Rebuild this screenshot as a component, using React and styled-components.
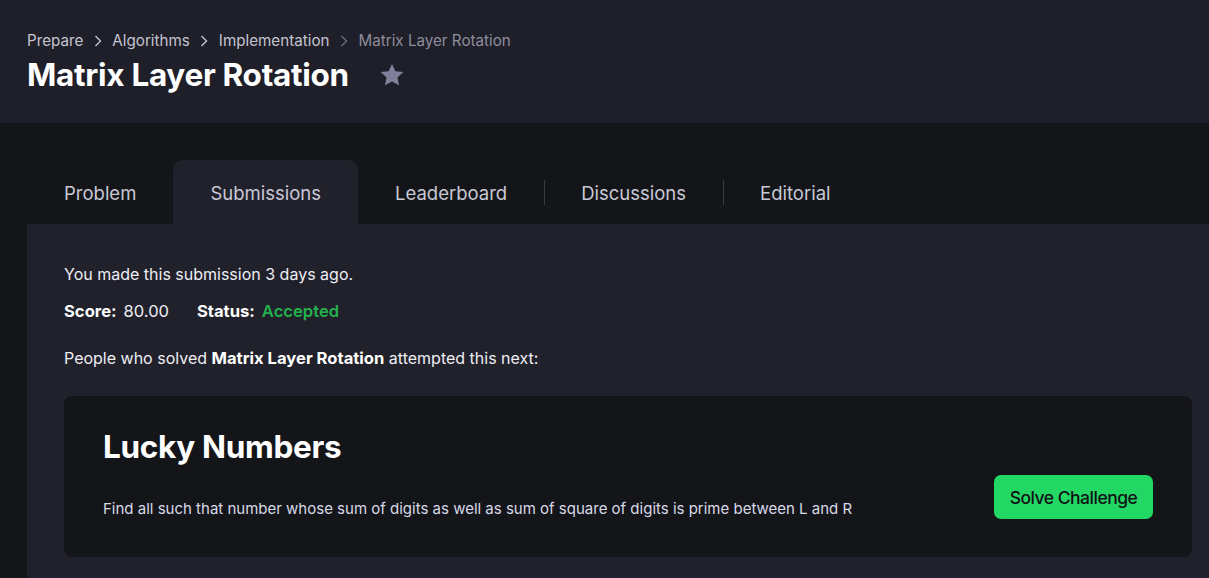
import React from "react";
import styled, { createGlobalStyle } from "styled-components";

const Global = createGlobalStyle`
  html, body { margin: 0; padding: 0; background: #141519; }
  body { font-family: Inter, "Noto Sans", sans-serif; color: #e6e6ee; }
  #root { min-height: 100vh; }
`;

const Page = styled.div`
  display: flex;
  flex-direction: column;
  min-height: 100vh;
  overflow: hidden;
`;

const Header = styled.header`
  background: #1f1f29;
  height: 123px;
  box-sizing: border-box;
  padding: 31px 27px 0;
  display: flex;
  flex-direction: column;
  gap: 4px;
`;

const Crumbs = styled.nav`
  display: flex;
  align-items: center;
  gap: 9.5px;
  font-size: 15.2px;
  line-height: 20px;
`;

const Crumb = styled.span`
  color: ${(p) => (p.$current ? "#8d8d9c" : "#c4c4d0")};
`;

const Chevron = ({ dim }) => (
  <svg width="10" height="14" viewBox="0 0 10 14" fill="none">
    <path d="M2.5 2 L7.5 7 L2.5 12" stroke={dim ? "#6c6c7a" : "#c4c4d0"} strokeWidth="1.4" />
  </svg>
);

const TitleRow = styled.div`
  display: flex;
  align-items: center;
  gap: 29px;
`;

const Title = styled.h1`
  margin: 0;
  font-size: 31.5px;
  line-height: 40px;
  font-weight: 700;
  color: #ffffff;
  letter-spacing: -0.3px;
`;

const Star = () => (
  <svg width="28" height="28" viewBox="0 0 24 24">
    <path
      d="M12 2.5l2.9 6.2 6.8.8-5 4.6 1.3 6.7L12 17.5l-6 3.3 1.3-6.7-5-4.6 6.8-.8z"
      fill="#7f809b"
    />
  </svg>
);

const Body = styled.main`
  padding: 37px 0 0 27px;
  display: flex;
  flex-direction: column;
`;

const Tabs = styled.div`
  display: flex;
  align-items: stretch;
  height: 64px;
`;

const Tab = styled.div`
  position: relative;
  display: flex;
  align-items: center;
  padding: 2px 37px 0;
  font-size: 18.5px;
  color: #c9c9d6;
  border-radius: 10px 10px 0 0;
  background: ${(p) => (p.$active ? "#21212c" : "transparent")};
  &::before {
    content: "";
    display: ${(p) => (p.$sep ? "block" : "none")};
    position: absolute;
    left: 0;
    top: 20px;
    height: 25px;
    width: 1px;
    background: #3a3a46;
  }
`;

const Panel = styled.section`
  background: #21212c;
  padding: 39px 17px 40px 37px;
  display: flex;
  flex-direction: column;
`;

const Line = styled.p`
  margin: 0;
  font-size: 16px;
  line-height: 22px;
  color: #eeeef4;
  margin-bottom: ${(p) => p.$mb || 0}px;
  display: flex;
  gap: 28px;
`;

const Field = styled.span`
  display: inline-flex;
  gap: 7px;
`;

const Strong = styled.b`
  font-weight: 700;
  font-size: 16.6px;
  color: #ffffff;
`;

const Value = styled.span`
  font-size: 16.5px;
`;

const Accepted = styled.span`
  color: #22b14c;
  font-weight: 600;
  font-size: 16.6px;
`;

const Card = styled.div`
  background: #141519;
  border-radius: 8px;
  padding: 31px 39px 38px;
  display: flex;
  align-items: flex-end;
  justify-content: space-between;
`;

const CardText = styled.div`
  display: flex;
  flex-direction: column;
  gap: 32px;
`;

const CardTitle = styled.h2`
  margin: 0;
  font-size: 31.5px;
  line-height: 40px;
  font-weight: 700;
  color: #ffffff;
  letter-spacing: -0.3px;
`;

const Desc = styled.p`
  margin: 0;
  font-size: 15px;
  line-height: 20px;
  color: #d8dae8;
`;

const Button = styled.button`
  background: #22d764;
  color: #111217;
  border: none;
  border-radius: 7px;
  width: 159px;
  height: 44px;
  font-family: Inter, sans-serif;
  font-size: 17.5px;
  font-weight: 500;
  letter-spacing: -0.5px;
  cursor: pointer;
`;

export default function App() {
  return (
    <Page>
      <Global />
      <Header>
        <Crumbs>
          <Crumb>Prepare</Crumb>
          <Chevron />
          <Crumb>Algorithms</Crumb>
          <Chevron />
          <Crumb>Implementation</Crumb>
          <Chevron dim />
          <Crumb $current>Matrix Layer Rotation</Crumb>
        </Crumbs>
        <TitleRow>
          <Title>Matrix Layer Rotation</Title>
          <Star />
        </TitleRow>
      </Header>
      <Body>
        <Tabs>
          <Tab>Problem</Tab>
          <Tab $active>Submissions</Tab>
          <Tab>Leaderboard</Tab>
          <Tab $sep>Discussions</Tab>
          <Tab $sep>Editorial</Tab>
        </Tabs>
        <Panel>
          <Line $mb={15}>You made this submission 3 days ago.</Line>
          <Line $mb={25}>
            <Field>
              <Strong>Score:</Strong> <Value>80.00</Value>
            </Field>
            <Field>
              <Strong>Status:</Strong> <Accepted>Accepted</Accepted>
            </Field>
          </Line>
          <Line $mb={27}>
            <span>
              People who solved <Strong>Matrix Layer Rotation</Strong> attempted this next:
            </span>
          </Line>
          <Card>
            <CardText>
              <CardTitle>Lucky Numbers</CardTitle>
              <Desc>
                Find all such that number whose sum of digits as well as sum of square of digits is prime between L and R
              </Desc>
            </CardText>
            <Button>Solve Challenge</Button>
          </Card>
        </Panel>
      </Body>
    </Page>
  );
}
